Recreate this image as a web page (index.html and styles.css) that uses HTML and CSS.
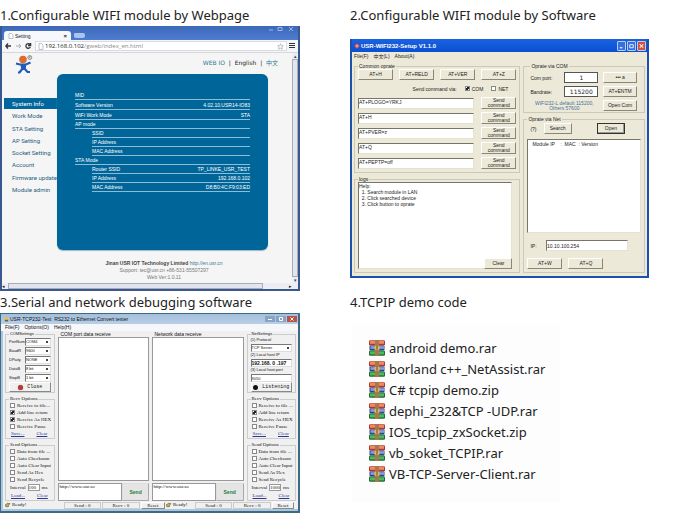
FILE: index.html
```html
<!DOCTYPE html>
<html lang="en">
<head>
<meta charset="utf-8">
<title>WIFI module software</title>
<link rel="stylesheet" href="styles.css">
</head>
<body>
<svg class="defs" aria-hidden="true">
  <symbol id="archive" viewBox="0 0 16 16">
    <rect x="0" y="0.200" width="16" height="5.200" rx="1.200" fill="#b8352c"/><rect x="1" y="0.800" width="14" height="3" fill="#ec8a66"/>
    <rect x="0.500" y="5.400" width="15" height="5" rx="1" fill="#2c4488"/><rect x="1.500" y="6.200" width="14" height="2.600" fill="#84a0dc"/>
    <rect x="0" y="10.500" width="16" height="5.300" rx="1.200" fill="#1f6b30"/><rect x="1" y="11.400" width="14" height="3" fill="#4fb95d"/>
    <rect x="6" y="0.200" width="4" height="15.600" fill="#9a6a3c"/><path d="M7 .2v15.600M9 .2v15.600" stroke="#cf9c62" stroke-width=".6"/>
    <rect x="5.500" y="5.800" width="5" height="4" fill="#e0b56a"/><path d="M8 5.500v4" stroke="#70421d"/>
  </symbol>
</svg>
<main class="page">
  <section>
    <h2>1.Configurable WIFI module by Webpage</h2>
    <div class="browser">
      <div class="tabs">
        <div class="tab"><svg viewBox="0 0 6 6"><path d="M1 .5h2.5L5 2v3.5H1z" fill="#fff" stroke="#999" stroke-width=".6"/></svg><span>Setting</span><b>×</b></div>
        <i class="newtab"></i>
        <svg class="caption" viewBox="0 0 26 7"><path d="M1 4h4M10 1.5h4v3h-4zM21 1l4 4M25 1l-4 4" fill="none" stroke="#9db6e6"/></svg>
      </div>
      <div class="toolbar">
        <svg class="arrows" viewBox="0 0 28 8"><path d="M6 4H1M3 1.5L.8 4 3 6.500" fill="none" stroke="#333" stroke-width="1.3"/><path d="M11 4h5M14 2l2 2-2 2" fill="none" stroke="#aaa"/><path d="M25 2.500a2.300 2.300 0 1 0 .3 2.500M25.600 1v2.500H23" fill="none" stroke="#333" stroke-width="1.3"/></svg>
        <div class="address"><svg viewBox="0 0 6 7"><path d="M1 .5h2.500L5 2v4.500H1z" fill="#fff" stroke="#999" stroke-width=".6"/></svg><span>192.168.0.102<em>/gweb/index_en.html</em></span>
          <svg class="star" viewBox="0 0 8 8"><path d="M4 .8l1 2.200 2.300.2-1.700 1.600.5 2.300L4 6 1.900 7.100l.5-2.300L.7 3.200 3 3z" fill="none" stroke="#999" stroke-width=".7"/></svg></div>
        <svg class="burger" viewBox="0 0 6 6"><path d="M0 .5h6M0 2.500h6M0 4.500h6" stroke="#333"/></svg>
      </div>
      <div class="view">
        <div class="site">
          <header>
            <svg class="logo" viewBox="0 0 18 19"><circle cx="8" cy="4.500" r="3.800" fill="#dc6b2c"/><path d="M1 8.500l4 1 6 0 4.500-2M8 9v4l-3.500 4.500H3M8.500 12.500l4 4.500H15" fill="none" stroke="#1f5bbd" stroke-width="2.200"/><path d="M5.500 9h5.500v4.500H6z" fill="#1f5bbd"/><circle cx="14.800" cy="2.500" r="2" fill="none" stroke="#555" stroke-width=".6"/><path d="M14.300 3.500v-2h1v1h-1l1.200 1" stroke="#555" stroke-width=".4" fill="none"/></svg>
            <p><a href="#">WEB IO</a> &nbsp;|&nbsp; <span>English</span> &nbsp;|&nbsp; <a href="#">中文</a></p>
          </header>
          <div class="columns">
            <nav><a class="on" href="#">System Info</a><a href="#">Work Mode</a><a href="#">STA Setting</a><a href="#">AP Setting</a><a href="#">Socket Setting</a><a href="#">Account</a><a href="#">Firmware update</a><a href="#">Module admin</a></nav>
            <dl class="panel">
              <div><dt>MID</dt><dd></dd></div>
              <div class="tall"><dt>Software Version</dt><dd>4.02.10.USR14-IO83</dd></div>
              <div class="tall"><dt>WiFi Work Mode</dt><dd>STA</dd></div>
              <div><dt>AP mode</dt><dd></dd></div>
              <div class="sub"><dt>SSID</dt><dd></dd></div>
              <div class="sub"><dt>IP Address</dt><dd></dd></div>
              <div class="sub"><dt>MAC Address</dt><dd></dd></div>
              <div><dt>STA Mode</dt><dd></dd></div>
              <div class="sub"><dt>Router SSID</dt><dd>TP_LINKE_USR_TEST</dd></div>
              <div class="sub"><dt>IP Address</dt><dd>192.168.0.102</dd></div>
              <div class="sub"><dt>MAC Address</dt><dd>D8:B0:4C:F9:03:ED</dd></div>
            </dl>
          </div>
          <footer><b>Jinan USR IOT Technology Limited</b> <a href="#">http://en.usr.cn</a><br>Support: tec@usr.cn +86-531-55507297<br>Web Ver:1.0.11</footer>
        </div>
        <div class="vbar"><i>▴</i><b></b><i>▾</i></div>
      </div>
      <div class="hbar"><i>◂</i><b></b><i>▸</i></div>
    </div>
  </section>

  <section>
    <h2>2.Configurable WIFI module by Software</h2>
    <div class="setup">
      <div class="xp-title"><svg viewBox="0 0 6 6"><path d="M3 0l3 3-3 3-3-3z" fill="#d23b38"/><path d="M3 1v4M1 3h4" stroke="#fff" stroke-width=".5"/></svg><span>USR-WIFI232-Setup V1.1.0</span>
        <button aria-label="Minimize"><svg viewBox="0 0 8 8"><path d="M2 6h3" stroke="#fff" stroke-width="1.300"/></svg></button><button aria-label="Maximize"><svg viewBox="0 0 8 8"><path d="M2 2.500h4v3.500H2z" fill="none" stroke="#fff"/></svg></button><button class="red" aria-label="Close"><svg viewBox="0 0 8 8"><path d="M2 2l4 4M6 2L2 6" stroke="#fff" stroke-width="1.200"/></svg></button></div>
      <div class="xp-menu"><span>File(F)</span><span>中文(L)</span><span>About(A)</span></div>
      <div class="xp-body">
        <div class="stack">
          <fieldset class="common">
            <legend>Common oprate</legend>
            <div class="four"><button>AT+H</button><button>AT+RELD</button><button>AT+VER</button><button>AT+Z</button></div>
            <div class="via"><span>Send command via:</span><label><input type="checkbox" checked>COM</label><label><input type="checkbox">NET</label></div>
            <div class="cmd"><input aria-label="Command 1" value="AT+PLOGO=YRKJ"><button>Send<br>command</button></div>
            <div class="cmd"><input aria-label="Command 2" value="AT+H"><button>Send<br>command</button></div>
            <div class="cmd"><input aria-label="Command 3" value="AT+PVER=z"><button>Send<br>command</button></div>
            <div class="cmd"><input aria-label="Command 4" value="AT+Q"><button>Send<br>command</button></div>
            <div class="cmd"><input aria-label="Command 5" value="AT+PEPTP=off"><button>Send<br>command</button></div>
          </fieldset>
          <fieldset class="logs">
            <legend>logs</legend>
            <textarea aria-label="Logs">Help:
  1. Search module in LAN
  2. Click searched device
  3. Click button to oprate</textarea>
            <button class="clear">Clear</button>
          </fieldset>
        </div>
        <div class="stack">
          <fieldset class="com">
            <legend>Oprate via COM</legend>
            <label for="port">Com port:</label><input id="port" value="1"><button>••• a</button>
            <label for="baud">Bandrate:</label><input id="baud" value="115200"><button>AT+ENTM</button>
            <p>WIFI232-L default 115200,<br>Others 57600</p><button>Open Com</button>
          </fieldset>
          <fieldset class="net">
            <legend>Oprate via Net</legend>
            <div class="find"><span>(?)</span><button>Search</button><button class="default">Open</button></div>
            <div class="list">Module IP &nbsp; &nbsp;: &nbsp;MAC &nbsp;: Version</div>
            <div class="ip"><label for="ip">IP:</label><input id="ip" value="10.10.100.254"></div>
            <div class="two"><button>AT+W</button><button>AT+Q</button></div>
          </fieldset>
        </div>
      </div>
    </div>
  </section>

  <section>
    <h2>3.Serial and network debugging software</h2>
    <div class="tester">
      <div class="t-title"><svg viewBox="0 0 6 6"><circle cx="3" cy="2.500" r="2.300" fill="#edbd43"/><path d="M1 4h4v2H1z" fill="#6a6840"/></svg><span>USR-TCP232-Test &nbsp;RS232 to Ethernet Convert tester</span>
        <button aria-label="Minimize"><svg viewBox="0 0 10 6"><path d="M3 3.500h4" stroke="#fff"/></svg></button><button aria-label="Maximize"><svg viewBox="0 0 10 6"><path d="M3.500 1.500h3v3h-3z" fill="none" stroke="#fff"/></svg></button><button class="red" aria-label="Close"><svg viewBox="0 0 10 6"><path d="M3.500 1.500l3 3M6.500 1.500l-3 3" stroke="#fff"/></svg></button></div>
      <div class="t-menu"><span>File(F)</span><span>Options(O)</span><span>Help(H)</span></div>
      <div class="t-body">
        <div class="side">
          <fieldset class="settings">
            <legend>COMSettings</legend>
            <div class="pair"><label for="pn">PortNum</label><select id="pn"><option>COM4</option></select></div>
            <div class="pair"><label for="br">BaudR</label><select id="br"><option>9600</option></select></div>
            <div class="pair"><label for="dp">DPaity</label><select id="dp"><option>NONE</option></select></div>
            <div class="pair"><label for="db">DataB</label><select id="db"><option>8 bit</option></select></div>
            <div class="pair"><label for="sb">StopB</label><select id="sb"><option>1 bit</option></select></div>
            <button class="big"><i class="led hot"></i>Close</button>
          </fieldset>
          <fieldset class="recv">
            <legend>Recv Options</legend>
            <label><input type="checkbox">Receive to file...</label>
            <label><input type="checkbox" checked>Add line return</label>
            <label><input type="checkbox" checked>Receive As HEX</label>
            <label><input type="checkbox">Receive Pause</label>
            <p><a href="#">Save...</a><a href="#">Clear</a></p>
          </fieldset>
          <fieldset class="sendopt">
            <legend>Send Options</legend>
            <label><input type="checkbox">Data from file ...</label>
            <label><input type="checkbox">Auto Checksum</label>
            <label><input type="checkbox">Auto Clear Input</label>
            <label><input type="checkbox">Send As Hex</label>
            <label><input type="checkbox">Send Recycle</label>
            <div class="interval"><label for="i1">Interval</label><input id="i1" value="100"><span>ms</span></div>
            <p><a href="#">Load...</a><a href="#">Clear</a></p>
          </fieldset>
        </div>
        <div class="pane">
          <h3>COM port data receive</h3><div class="well"></div>
          <div class="send"><textarea aria-label="COM data">http://www.usr.so</textarea><button>Send</button></div>
        </div>
        <div class="pane">
          <h3>Network data receive</h3><div class="well"></div>
          <div class="send"><textarea aria-label="Network data">http://www.usr.so</textarea><button>Send</button></div>
        </div>
        <div class="side">
          <fieldset class="settings">
            <legend>NetSettings</legend>
            <div class="field"><label for="pr">(1) Protocol</label><select id="pr"><option>TCP Server</option></select></div>
            <div class="field"><label for="hi">(2) Local host IP</label><input id="hi" class="strong" value="192.168. 0 .197"></div>
            <div class="field"><label for="hp">(3) Local host port</label><input id="hp" value="9050"></div>
            <button class="big"><i class="led"></i>Listening</button>
          </fieldset>
          <fieldset class="recv">
            <legend>Recv Options</legend>
            <label><input type="checkbox">Receive to file ...</label>
            <label><input type="checkbox" checked>Add line return</label>
            <label><input type="checkbox">Receive As HEX</label>
            <label><input type="checkbox">Receive Pause</label>
            <p><a href="#">Save...</a><a href="#">Clear</a></p>
          </fieldset>
          <fieldset class="sendopt">
            <legend>Send Options</legend>
            <label><input type="checkbox">Data from file ...</label>
            <label><input type="checkbox">Auto Checksum</label>
            <label><input type="checkbox">Auto Clear Input</label>
            <label><input type="checkbox">Send As Hex</label>
            <label><input type="checkbox">Send Recycle</label>
            <div class="interval"><label for="i2">Interval</label><input id="i2" value="1000"><span>ms</span></div>
            <p><a href="#">Load...</a><a href="#">Clear</a></p>
          </fieldset>
        </div>
      </div>
      <div class="status">
        <b><svg viewBox="0 0 7 6"><path d="M0 3l3-2 3 .5-2 1.500v2H1z" fill="#c9b22c" stroke="#444" stroke-width=".6"/></svg>Ready!</b><span>Send : 0</span><span>Recv : 0</span><button>Reset</button>
        <b><svg viewBox="0 0 7 6"><path d="M0 3l3-2 3 .5-2 1.500v2H1z" fill="#c9b22c" stroke="#444" stroke-width=".6"/></svg>Ready!</b><span>Send : 0</span><span>Recv : 0</span><button>Reset</button>
      </div>
    </div>
  </section>

  <section>
    <h2>4.TCPIP demo code</h2>
    <ul class="files">
      <li><svg><use href="#archive"/></svg>android demo.rar</li>
      <li><svg><use href="#archive"/></svg>borland c++_NetAssist.rar</li>
      <li><svg><use href="#archive"/></svg>C# tcpip demo.zip</li>
      <li><svg><use href="#archive"/></svg>dephi_232&amp;TCP -UDP.rar</li>
      <li><svg><use href="#archive"/></svg>IOS_tcpip_zxSocket.zip</li>
      <li><svg><use href="#archive"/></svg>vb_soket_TCPIP.rar</li>
      <li><svg><use href="#archive"/></svg>VB-TCP-Server-Client.rar</li>
    </ul>
  </section>
</main>
</body>
</html>
```
FILE: styles.css
```css
* { box-sizing: border-box; }
body { margin: 0; background: #fff; color: #222; font-family: "Liberation Sans", "Noto Sans CJK SC", sans-serif; }
h2, h3, p, dl, dd, ul { margin: 0; padding: 0; font-weight: normal; }
button, input, select, textarea { margin: 0; padding: 0; border-radius: 0; font: inherit; color: inherit; min-width: 0; }
fieldset { margin: 0; min-width: 0; }
svg { display: block; flex: none; }
a { color: inherit; text-decoration: none; }
.defs { position: absolute; width: 0; height: 0; }

.page { display: grid; grid-template-columns: 350fr 349fr; padding-top: 4px; }
section { min-width: 0; }
h2 { padding: 3px 0; font: 13px/16px "Noto Sans", sans-serif; white-space: nowrap; }
.browser, .setup, .tester { margin-right: 50px; }

/* browser window */
.browser { border: 2px solid #37598f; border-top: 0; background: #f5f5f5; }
.tabs { display: flex; height: 14px; align-items: flex-end; padding-left: 2px; background: linear-gradient(#3d68b8, #4d7cd0); }
.tab { display: flex; align-items: center; width: 67px; height: 9px; padding: 0 4px; gap: 1px; border-radius: 3px 3px 0 0; background: #f6f8fc; font-size: 5px; }
.tab svg { width: 6px; height: 6px; }
.tab b { margin-left: auto; font-size: 6px; line-height: 8px; }
.newtab { width: 11px; height: 5px; margin: 0 0 2px 3px; border-radius: 1px 2px 2px; background: #a9c4ef; }
.caption { width: 26px; height: 7px; margin: 0 4px 7px auto; }
.toolbar { display: flex; align-items: center; height: 13px; padding: 0 3px; gap: 2px; border-bottom: 1px solid #d5d8dd; background: #f4f6f9; }
.arrows { width: 28px; height: 8px; }
.address { display: flex; flex: 1; align-items: center; height: 10px; padding: 0 2px; gap: 1px; border: 1px solid #d8dbe0; background: #fff; font: 6px/8px "Open Sans", sans-serif; }
.address svg { width: 6px; height: 7px; }
.address em { color: #888; font-style: normal; }
.address .star { width: 7px; height: 7px; margin-left: auto; }
.burger { width: 6px; height: 6px; }
.view { display: flex; }
.site { flex: 1; min-width: 0; }
.site header { display: flex; justify-content: space-between; height: 21px; padding: 2px 14px 0 13px; }
.logo { width: 18px; height: 19px; }
.site header p { padding-top: 4px; font: 6px/8px "DejaVu Sans", "Noto Sans CJK SC", sans-serif; }
.site header a { color: #2f7994; }
.columns { display: flex; padding: 0 24px 0 2px; }
.site nav { display: flex; flex: none; flex-direction: column; justify-content: space-between; width: 53px; height: 121px; padding-top: 24px; color: #276080; font: 6px/11px Roboto, sans-serif; white-space: nowrap; }
.site nav a { padding-left: 8px; }
.site nav .on { background: #00669c; color: #fff; }
.panel { flex: 1; padding: 17px 18px 58px; border-radius: 6px; background: #006699; box-shadow: 0 1px 1px #9db6c5; color: #fff; font-size: 5px; line-height: 8px; }
.panel div { display: flex; justify-content: space-between; height: 9px; border-bottom: 1px solid #8bbdd6; white-space: nowrap; }
.panel .tall { height: 10px; padding-top: 1px; }
.panel .sub { margin-left: 17px; }
.site footer { padding: 10px 0 2px 34px; color: #777; font: 5px/7px "Liberation Sans", sans-serif; text-align: center; }
.site footer b { color: #444; }
.site footer a { color: #377798; }
.vbar { display: flex; flex-direction: column; width: 6px; background: #eceef4; color: #444; font-size: 5px; line-height: 6px; text-align: center; }
.vbar b { flex: 1; border: 1px solid #aab; background: #e3e5ee; }
.vbar i, .hbar i { font-style: normal; }
.hbar { display: flex; height: 6px; padding-right: 6px; background: #eceef4; font-size: 5px; line-height: 6px; }
.hbar b { flex: 1; margin: 0 26px 0 3px; border: 1px solid #aab; background: #e3e5ee; }

/* setup tool */
.setup { margin-top: 13px; border: 2px solid #1c4fae; border-top: 0; background: #ece9d8; font-size: 5px; line-height: 6px; white-space: nowrap; }
.xp-title { display: flex; align-items: center; height: 13px; padding: 0 1px 0 2px; gap: 1px; background: linear-gradient(#1a63e0, #0a4fd2); color: #fff; font: bold 6px/8px "Liberation Sans", sans-serif; }
.xp-title svg { width: 6px; height: 6px; }
.xp-title span { flex: 1; }
.xp-title button { width: 9px; height: 10px; border: 1px solid #b5ccf5; border-radius: 1px; background: #376fdc; }
.xp-title button svg { width: 7px; height: 8px; }
.xp-title .red { background: #d3533a; }
.xp-menu { display: flex; gap: 5px; height: 9px; padding-left: 2px; font-size: 5px; line-height: 8px; }
.xp-body { display: grid; grid-template-columns: 167fr 122fr; gap: 3px; padding: 2px 2px 3px; }
.stack { display: flex; flex-direction: column; gap: 3px; min-width: 0; }
.setup fieldset { padding: 0 3px; border: 1px solid #cbc9b8; }
.setup legend { padding: 0 1px; line-height: 6px; }
.setup button { line-height: 5px; }
.stack button { height: 11px; border: 1px solid #fff; border-color: #fff #8a8778 #8a8778 #fff; background: #ece9d8; }
.setup input, .setup textarea, .list { border: 1px solid; border-color: #77756a #e5e2d2 #e5e2d2 #77756a; outline: 0; background: #fff; }
.four { display: grid; grid-template-columns: repeat(4, 1fr); gap: 6px; }
.via { display: flex; justify-content: flex-end; align-items: center; gap: 8px; height: 17px; padding-right: 8px; }
.via label { display: flex; align-items: center; gap: 2px; }
input[type="checkbox"] { flex: none; appearance: none; width: 5px; height: 5px; border: 1px solid #888; background: #fff; }
input[type="checkbox"]:checked { background: linear-gradient(135deg, #fff 20%, #222 20% 70%, #fff 70%); }
.cmd { display: grid; grid-template-columns: 115fr 35fr; gap: 7px; align-items: center; padding-bottom: 3px; }
.cmd input { height: 11px; padding-bottom: 2px; }
.cmd button { height: 12px; }
.logs { position: relative; display: flex; }
.logs textarea { flex: 1; height: 87px; margin: 0 4px 3px 0; font-size: 5px; line-height: 6px; resize: none; overflow: hidden; white-space: pre; }
.clear { position: absolute; right: 7px; bottom: 3px; width: 28px; }
.setup .com { display: grid; grid-template-columns: 30fr 35fr 35fr; gap: 3px 5px; align-items: center; padding: 3px 7px 1px 6px; }
.com input { width: 100%; height: 11px; border: 1px solid #555; font: 6px/9px "DejaVu Sans", sans-serif; text-align: center; }
.com p { grid-column: span 2; color: #49729a; text-align: center; line-height: 5px; }
.net { flex: 1; display: flex; flex-direction: column; }
.find { display: flex; align-items: center; padding: 1px 16px 5px 3px; }
.find button { width: 28px; margin-left: 7px; }
.find .default { margin-left: auto; border: 1px solid #333; box-shadow: inset -1px -1px #999; }
.list { flex: 1; padding: 1px 4px; }
.ip { display: flex; align-items: center; justify-content: space-between; padding: 7px 13px 7px 3px; }
.ip input { width: 82px; height: 11px; }
.two { display: flex; gap: 6px; padding: 0 0 3px; }
.two button { width: 35px; }

/* serial and network tester */
.tester { border: 1px solid #3f6a84; border-width: 1px 2px 2px 1px; background: #f0f0f0; box-shadow: inset 2px -2px #a9c7e0; font: 5px/6px "Liberation Serif", serif; color: #111; white-space: nowrap; }
.t-title { display: flex; align-items: center; height: 10px; padding: 0 1px 0 3px; gap: 1px; background: linear-gradient(#a3bfdd, #b9cfe6); font: 5px/8px "Liberation Sans", sans-serif; }
.t-title svg { width: 5px; height: 6px; }
.t-title span { flex: 1; }
.t-title button { width: 10px; height: 6px; border: 0; background: #88a4c4; }
.t-title button svg { width: 10px; }
.t-title .red { background: #b85346; }
.t-menu { display: flex; gap: 5px; height: 7px; padding-left: 4px; background: #f5f7fb; font: 5px/7px "Liberation Sans", sans-serif; }
.t-body { display: grid; grid-template-columns: 51fr 92fr 92fr 50fr; gap: 3px; padding: 0 2px 1px 4px; }
.side { display: flex; flex-direction: column; gap: 3px; min-width: 0; }
.side fieldset { padding: 0 3px; border: 1px solid #ccc; }
.side legend { padding: 0 1px; line-height: 6px; }
.settings { display: flex; flex-direction: column; height: 62px; font-family: "Liberation Sans", sans-serif; font-size: 4px; }
.pair { display: grid; grid-template-columns: 15fr 25fr; align-items: center; height: 9px; }
.tester select, .settings input { width: 100%; height: 8px; border: 1px solid #aaa; border-color: #777 #ddd #ddd #777; background: #fff; outline: 0; }
.tester select { appearance: none; background: linear-gradient(#444, #444) right 2px center / 2px 2px no-repeat #fff; }
.field { display: grid; grid-template-rows: 7px 8px; height: 15px; }
.settings .strong { font-weight: bold; font-size: 5px; }
.big { display: flex; align-items: center; justify-content: center; gap: 4px; height: 10px; margin-top: auto; border: 1px solid; border-color: #fff #888 #888 #fff; background: #f0f0f0; font: 5px/8px "Liberation Mono", monospace; }
.led { width: 5px; height: 5px; border-radius: 50%; background: #111; }
.hot { background: #b43a3a; box-shadow: 0 0 1px #b43a3a; }
.recv > label, .sendopt > label { display: flex; align-items: center; gap: 2px; height: 7px; padding-left: 1px; }
.recv p, .sendopt p { display: flex; gap: 12px; height: 8px; padding-left: 2px; line-height: 8px; color: #2c3594; }
.side p a { text-decoration: underline; }
.interval { display: flex; align-items: center; gap: 2px; height: 9px; padding-left: 1px; }
.interval input { width: 12px; height: 7px; border: 1px solid #999; background: #fff; }
.pane { display: flex; flex-direction: column; min-width: 0; }
.pane h3 { padding-left: 2px; font: 5px/6px "Liberation Sans", sans-serif; }
.well { flex: 1; border: 1px solid #999; background: #fff; }
.send { display: grid; grid-template-columns: 64fr 28fr; height: 18px; margin-top: 2px; }
.send textarea { border: 1px solid #999; background: #fff; resize: none; overflow: hidden; }
.send button { border: 1px solid; border-color: #ddd #aaa #aaa #ddd; background: #e5e5e5; color: #257b38; font: bold 5px/6px "Liberation Sans", sans-serif; }
.status { display: grid; grid-template-columns: 52fr 34fr 34fr 22fr 25fr 34fr 34fr 20fr; gap: 1px; height: 9px; padding: 0 4px 2px; line-height: 6px; text-align: center; }
.status b { display: flex; gap: 1px; font-weight: normal; }
.status svg { width: 6px; height: 6px; }
.status span { border: 1px solid #ccc; line-height: 5px; }
.status button { border: 1px solid; border-color: #fff #888 #888 #fff; background: #f0f0f0; line-height: 4px; }

/* archive list */
.files { margin: 11px 139px 0 2px; padding: 13px 0 18px 17px; background: #fdfdfd; list-style: none; }
.files li { display: flex; align-items: center; gap: 4px; height: 21px; font: 13px/20px "Noto Sans", sans-serif; white-space: nowrap; }
.files svg { width: 16px; height: 16px; }
```
